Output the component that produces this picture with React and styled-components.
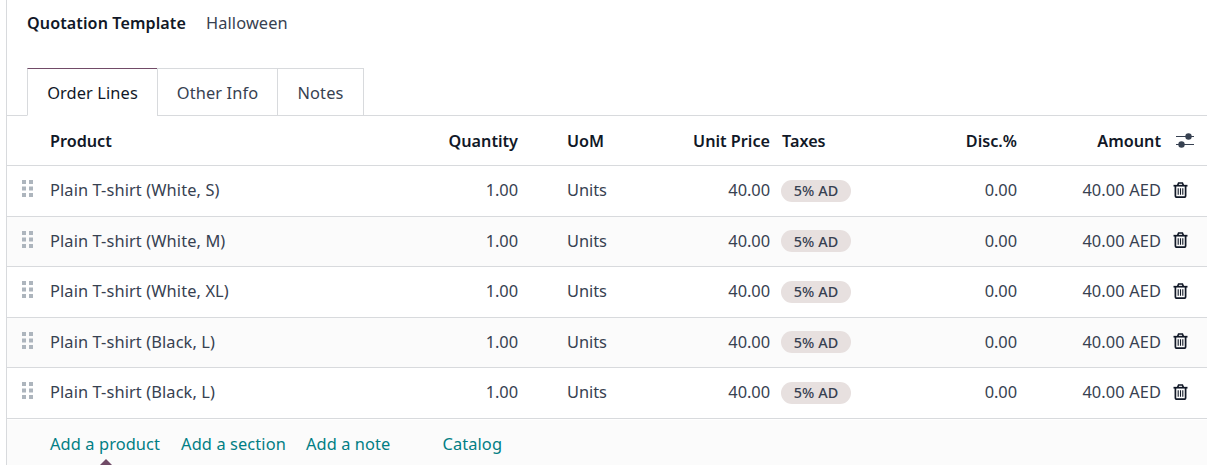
import React from "react";
import styled, { createGlobalStyle } from "styled-components";

const GlobalStyle = createGlobalStyle`
  html, body {
    margin: 0;
    padding: 0;
    background: #fff;
    overflow: hidden;
  }
  body {
    font-family: "Noto Sans", "Open Sans", sans-serif;
    font-size: 16.4px;
    letter-spacing: 0.1px;
    color: #374151;
  }
`;

const COLUMNS = "43px 375px 93px 122px 130px 140px 107px 144px 46px";

const lines = [
  "Plain T-shirt (White, S)",
  "Plain T-shirt (White, M)",
  "Plain T-shirt (White, XL)",
  "Plain T-shirt (Black, L)",
  "Plain T-shirt (Black, L)",
];

const DragIcon = () => (
  <svg width="12" height="18" viewBox="0 0 12 18" fill="#adb5bd">
    <rect x="0" y="0" width="4" height="4" />
    <rect x="7" y="0" width="4" height="4" />
    <rect x="0" y="6.5" width="4" height="4" />
    <rect x="7" y="6.5" width="4" height="4" />
    <rect x="0" y="13" width="4" height="4" />
    <rect x="7" y="13" width="4" height="4" />
  </svg>
);

const TrashIcon = () => (
  <svg width="15" height="16" viewBox="0 0 15 16" fill="none" stroke="#111827" strokeWidth="1.7">
    <path d="M0.5 3.7H14.5" />
    <path d="M4.6 3.5L5.6 1H9.4L10.4 3.5" />
    <path d="M2.4 3.7V14C2.4 14.8 2.9 15.2 3.5 15.2H11.5C12.1 15.2 12.6 14.8 12.6 14V3.7" />
    <path d="M5.2 6.2V12.8M7.5 6.2V12.8M9.8 6.2V12.8" strokeWidth="1.1" />
  </svg>
);

const SlidersIcon = () => (
  <svg width="18" height="16" viewBox="0 0 18 16" fill="#374151">
    <rect x="0" y="3" width="18" height="1" />
    <rect x="0" y="11" width="18" height="1" />
    <circle cx="12.5" cy="3.5" r="3.2" />
    <circle cx="5.5" cy="11.5" r="3.2" />
  </svg>
);

const Page = styled.div`
  box-sizing: border-box;
  height: 465px;
  width: 1201px;
  margin-left: 6px;
  border-left: 1px solid #d8dadd;
  position: relative;
  overflow: hidden;
`;

const TemplateRow = styled.div`
  display: flex;
  align-items: baseline;
  height: 68px;
  box-sizing: border-box;
  padding: 11px 0 0 20px;
`;

const TemplateLabel = styled.span`
  font-weight: 600;
  font-size: 16.1px;
  color: #111827;
  width: 179px;
`;

const TemplateValue = styled.span`
  color: #374151;
`;

const Tabs = styled.div`
  display: flex;
  height: 48px;
  box-sizing: border-box;
  padding-left: 20px;
  border-bottom: 1px solid #d8dadd;
`;

const Tab = styled.div`
  box-sizing: border-box;
  width: ${(p) => p.$width}px;
  height: 48px;
  margin-right: ${(p) => (p.$last ? 0 : -1)}px;
  display: flex;
  align-items: center;
  justify-content: center;
  background: #fff;
  border: 1px solid #d8dadd;
  border-top-color: ${(p) => (p.$active ? "#714b67" : "#d8dadd")};
  border-bottom-color: ${(p) => (p.$active ? "#fff" : "#d8dadd")};
  color: ${(p) => (p.$active ? "#111827" : "#374151")};
`;

const Row = styled.div`
  display: grid;
  grid-template-columns: ${COLUMNS};
  align-items: center;
  box-sizing: border-box;
  height: 50.5px;
  margin-left: -1px;
  padding: 0 0 2px 1px;
  border-bottom: 1px solid #d8dadd;
  background: ${(p) => (p.$odd ? "#fbfbfb" : "#fff")};
`;

const HeadRow = styled(Row)`
  height: 50px;
  padding-bottom: 0;
  font-size: 16.2px;
  letter-spacing: 0;
  font-weight: 600;
  color: #111827;
`;

const Cell = styled.div`
  white-space: nowrap;
  text-align: ${(p) => (p.$right ? "right" : "left")};
  padding-left: ${(p) => p.$pad || 0}px;
`;

const NumCell = styled(Cell)`
  letter-spacing: -0.05px;
`;

const HandleCell = styled.div`
  display: flex;
  padding-left: 15px;
  margin-top: -1px;
`;

const IconCell = styled.div`
  display: flex;
  padding-left: ${(p) => p.$pad || 11}px;
`;

const Badge = styled.span`
  display: inline-flex;
  align-items: center;
  justify-content: center;
  width: 70px;
  height: 22px;
  border-radius: 11px;
  background: #e7e0df;
  color: #374151;
  font-size: 14.4px;
  font-weight: 500;
  letter-spacing: 0.1px;
`;

const Footer = styled.div`
  display: flex;
  align-items: center;
  box-sizing: border-box;
  height: 50px;
  padding: 0 0 3px 43px;
  margin-top: 1px;
  background: #fbfbfb;
`;

const AddLink = styled.a`
  color: #017e84;
  margin-right: ${(p) => p.$gap}px;
  white-space: nowrap;
`;

const Caret = styled.div`
  position: absolute;
  left: 93px;
  top: 459px;
  width: 0;
  height: 0;
  border-left: 6px solid transparent;
  border-right: 6px solid transparent;
  border-bottom: 6px solid #714b67;
`;

export default function App() {
  return (
    <>
      <GlobalStyle />
      <Page>
        <TemplateRow>
          <TemplateLabel>Quotation Template</TemplateLabel>
          <TemplateValue>Halloween</TemplateValue>
        </TemplateRow>
        <Tabs>
          <Tab $active $width={131}>Order Lines</Tab>
          <Tab $width={121}>Other Info</Tab>
          <Tab $width={87} $last>Notes</Tab>
        </Tabs>
        <HeadRow>
          <span />
          <Cell>Product</Cell>
          <Cell $right>Quantity</Cell>
          <Cell $pad={49}>UoM</Cell>
          <Cell $right>Unit Price</Cell>
          <Cell $pad={12}>Taxes</Cell>
          <Cell $right>Disc.%</Cell>
          <Cell $right>Amount</Cell>
          <IconCell $pad={15}><SlidersIcon /></IconCell>
        </HeadRow>
        {lines.map((name, i) => (
          <Row key={i} $odd={i % 2 === 1}>
            <HandleCell><DragIcon /></HandleCell>
            <Cell>{name}</Cell>
            <NumCell $right>1.00</NumCell>
            <NumCell $pad={49}>Units</NumCell>
            <NumCell $right>40.00</NumCell>
            <Cell $pad={11}><Badge>5% AD</Badge></Cell>
            <NumCell $right>0.00</NumCell>
            <Cell $right>40.00 AED</Cell>
            <IconCell $pad={12}><TrashIcon /></IconCell>
          </Row>
        ))}
        <Footer>
          <AddLink $gap={21}>Add a product</AddLink>
          <AddLink $gap={20}>Add a section</AddLink>
          <AddLink $gap={52}>Add a note</AddLink>
          <AddLink $gap={0}>Catalog</AddLink>
        </Footer>
        <Caret />
      </Page>
    </>
  );
}
